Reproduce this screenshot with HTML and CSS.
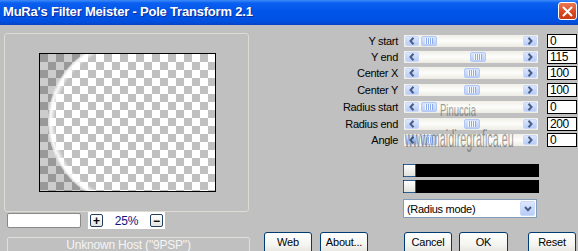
FILE: index.html
```html
<!DOCTYPE html>
<html>
<head>
  <title>MuRa's Filter Meister - Pole Transform 2.1</title>
  <link rel="stylesheet" href="styles.css">
</head>
<body>
  <div class="window">
    <div class="titlebar">
      <span class="title">MuRa's Filter Meister - Pole Transform 2.1</span>
      <span class="close">
        <svg width="11" height="11" viewBox="0 0 11 11"><path d="M1.5 1.5 L9.5 9.5 M9.5 1.5 L1.5 9.5" stroke="#fff" stroke-width="2" stroke-linecap="round"/></svg>
      </span>
    </div>

    <div class="client">
      <!-- preview side -->
      <div class="left">
        <div class="preview-frame">
          <div class="preview">
            <svg width="175" height="137" viewBox="0 0 175 137">
              <defs>
                <pattern id="chk" width="16" height="16" patternUnits="userSpaceOnUse">
                  <rect width="16" height="16" fill="#fff"/>
                  <rect width="8" height="8" fill="#c0c0c0"/>
                  <rect x="8" y="8" width="8" height="8" fill="#c0c0c0"/>
                </pattern>
                <radialGradient id="rim" cx="91" cy="68" r="83" gradientUnits="userSpaceOnUse">
                  <stop offset="0.91" stop-color="#fff" stop-opacity="0"/>
                  <stop offset="0.97" stop-color="#fff" stop-opacity="0.9"/>
                  <stop offset="1" stop-color="#d4d4d4" stop-opacity="0.85"/>
                </radialGradient>
                <clipPath id="lefthalf"><rect width="88" height="137"/></clipPath>
              </defs>
              <rect width="175" height="137" fill="url(#chk)"/>
              <path d="M0 0 H43.4 A83 83 0 0 0 44.9 137 H0 Z" fill="#000" fill-opacity="0.2"/>
              <circle cx="91" cy="68" r="83" fill="url(#rim)" clip-path="url(#lefthalf)"/>
            </svg>
          </div>
        </div>
        <div class="zoom-row">
          <div class="field"></div>
          <div class="zoom-ctl">
            <span class="zbtn">+</span>
            <span class="zval">25%</span>
            <span class="zbtn">&minus;</span>
          </div>
        </div>
        <div class="status">Unknown Host ("9PSP")</div>
      </div>

      <!-- controls side -->
      <div class="right">
        <div class="sliders">
          <span class="label">Y start</span>
          <div class="scroll">
            <span class="arrow"><svg width="6" height="8" viewBox="0 0 6 8"><path d="M4.5 0.8 L1.5 4 L4.5 7.2" fill="none" stroke="#4a5d86" stroke-width="2"/></svg></span>
            <div class="track"><span class="thumb" style="margin-left: 2px"><i></i></span></div>
            <span class="arrow"><svg width="6" height="8" viewBox="0 0 6 8"><path d="M1.5 0.8 L4.5 4 L1.5 7.2" fill="none" stroke="#4a5d86" stroke-width="2"/></svg></span>
          </div>
          <span class="value">0</span>

          <span class="label">Y end</span>
          <div class="scroll">
            <span class="arrow"><svg width="6" height="8" viewBox="0 0 6 8"><path d="M4.5 0.8 L1.5 4 L4.5 7.2" fill="none" stroke="#4a5d86" stroke-width="2"/></svg></span>
            <div class="track"><span class="thumb" style="margin-left: 51px"><i></i></span></div>
            <span class="arrow"><svg width="6" height="8" viewBox="0 0 6 8"><path d="M1.5 0.8 L4.5 4 L1.5 7.2" fill="none" stroke="#4a5d86" stroke-width="2"/></svg></span>
          </div>
          <span class="value">115</span>

          <span class="label">Center X</span>
          <div class="scroll">
            <span class="arrow"><svg width="6" height="8" viewBox="0 0 6 8"><path d="M4.5 0.8 L1.5 4 L4.5 7.2" fill="none" stroke="#4a5d86" stroke-width="2"/></svg></span>
            <div class="track"><span class="thumb" style="margin-left: 45px"><i></i></span></div>
            <span class="arrow"><svg width="6" height="8" viewBox="0 0 6 8"><path d="M1.5 0.8 L4.5 4 L1.5 7.2" fill="none" stroke="#4a5d86" stroke-width="2"/></svg></span>
          </div>
          <span class="value">100</span>

          <span class="label">Center Y</span>
          <div class="scroll">
            <span class="arrow"><svg width="6" height="8" viewBox="0 0 6 8"><path d="M4.5 0.8 L1.5 4 L4.5 7.2" fill="none" stroke="#4a5d86" stroke-width="2"/></svg></span>
            <div class="track"><span class="thumb" style="margin-left: 45px"><i></i></span></div>
            <span class="arrow"><svg width="6" height="8" viewBox="0 0 6 8"><path d="M1.5 0.8 L4.5 4 L1.5 7.2" fill="none" stroke="#4a5d86" stroke-width="2"/></svg></span>
          </div>
          <span class="value">100</span>

          <span class="label">Radius start</span>
          <div class="scroll">
            <span class="arrow"><svg width="6" height="8" viewBox="0 0 6 8"><path d="M4.5 0.8 L1.5 4 L4.5 7.2" fill="none" stroke="#4a5d86" stroke-width="2"/></svg></span>
            <div class="track"><span class="thumb" style="margin-left: 2px"><i></i></span></div>
            <span class="arrow"><svg width="6" height="8" viewBox="0 0 6 8"><path d="M1.5 0.8 L4.5 4 L1.5 7.2" fill="none" stroke="#4a5d86" stroke-width="2"/></svg></span>
          </div>
          <span class="value">0</span>

          <span class="label">Radius end</span>
          <div class="scroll">
            <span class="arrow"><svg width="6" height="8" viewBox="0 0 6 8"><path d="M4.5 0.8 L1.5 4 L4.5 7.2" fill="none" stroke="#4a5d86" stroke-width="2"/></svg></span>
            <div class="track"><span class="thumb" style="margin-left: 45px"><i></i></span></div>
            <span class="arrow"><svg width="6" height="8" viewBox="0 0 6 8"><path d="M1.5 0.8 L4.5 4 L1.5 7.2" fill="none" stroke="#4a5d86" stroke-width="2"/></svg></span>
          </div>
          <span class="value">200</span>

          <span class="label">Angle</span>
          <div class="scroll">
            <span class="arrow"><svg width="6" height="8" viewBox="0 0 6 8"><path d="M4.5 0.8 L1.5 4 L4.5 7.2" fill="none" stroke="#4a5d86" stroke-width="2"/></svg></span>
            <div class="track"><span class="thumb" style="margin-left: 2px"><i></i></span></div>
            <span class="arrow"><svg width="6" height="8" viewBox="0 0 6 8"><path d="M1.5 0.8 L4.5 4 L1.5 7.2" fill="none" stroke="#4a5d86" stroke-width="2"/></svg></span>
          </div>
          <span class="value">0</span>
        </div>

        <div class="bar first"><span class="swatch"></span></div>
        <div class="bar"><span class="swatch"></span></div>

        <div class="select">
          <span class="select-text">(Radius mode)</span>
          <span class="select-btn">
            <svg width="8" height="6" viewBox="0 0 8 6"><path d="M1 1 L4 4.2 L7 1" fill="none" stroke="#4a5d86" stroke-width="2"/></svg>
          </span>
        </div>

        <div class="buttons">
          <span class="btn btn-web">Web</span>
          <span class="btn btn-about">About...</span>
          <span class="btn btn-cancel">Cancel</span>
          <span class="btn btn-ok">OK</span>
          <span class="btn btn-reset">Reset</span>
        </div>
      </div>
    </div>

    <!-- watermark laid over the sliders -->
    <div class="watermark wm1">Pinuccia</div>
    <div class="watermark wm2">www.maidiregrafica.eu</div>
  </div>
</body>
</html>
```

FILE: styles.css
```css
* {
  box-sizing: border-box;
}
body {
  margin: 0;
  background-color: #c0c0c0;
  font-family: "Liberation Sans", Arial, sans-serif;
  font-size: 11px;
  letter-spacing: -0.2px;
  color: #000;
}
.window {
  position: relative;
  width: 578px;
  height: 251px;
  overflow: hidden;
  background-color: #c0c0c0;
}

/* title bar */
.titlebar {
  height: 25px;
  display: flex;
  justify-content: space-between;
  align-items: flex-start;
  padding: 0 1px 0 3px;
  background: linear-gradient(#3d8cf8 0, #0b5ff0 3px, #0055e8 45%, #0050e2 85%, #0a44c6 100%);
}
.title {
  margin-top: 4px;
  color: #fff;
  font-weight: bold;
  font-size: 13px;
  letter-spacing: -0.2px;
  text-shadow: 1px 1px 0 #0c2a98;
}
.close {
  margin-top: 2px;
  width: 19px;
  height: 18px;
  border: 1px solid #fff;
  border-radius: 3px;
  background: linear-gradient(#ea7a55, #d8461f 60%, #c93a14);
  display: flex;
  align-items: center;
  justify-content: center;
}
.close svg {
  display: block;
}

.client {
  display: flex;
}

/* left column */
.left {
  width: 255px;
  padding-top: 8px;
}
.preview-frame {
  margin-left: 4px;
  width: 245px;
  height: 179px;
  border: 1px solid #dcdcd2;
  border-radius: 3px;
  padding: 19px 0 0 34px;
}
.preview {
  width: 177px;
  height: 139px;
  border: 1px solid #000;
}
.preview svg {
  display: block;
}
.zoom-row {
  display: flex;
  align-items: center;
  height: 17px;
  padding-left: 7px;
}
.field {
  width: 74px;
  height: 15px;
  background: #fff;
  border: 1px solid #8a8a8a;
  border-radius: 2px;
}
.zoom-ctl {
  margin-left: 7px;
  width: 77px;
  height: 17px;
  background: #fff;
  display: flex;
  align-items: center;
  padding-left: 2px;
}
.zbtn {
  width: 13px;
  height: 13px;
  border: 1px solid #24405e;
  border-radius: 2px;
  background: linear-gradient(#fff, #e6e6e0);
  display: flex;
  align-items: center;
  justify-content: center;
  font-weight: bold;
  font-size: 12px;
  line-height: 1;
}
.zval {
  width: 47px;
  text-align: center;
  color: #12127c;
  font-size: 12px;
}
.status {
  margin: 8px 0 0 7px;
  width: 243px;
  height: 20px;
  border: 1px solid #e0e0da;
  border-radius: 2px;
  color: #f4f4f4;
  text-align: center;
  font-size: 12px;
  line-height: 15px;
}

/* right column */
.right {
  width: 323px;
  padding-top: 8px;
}
.sliders {
  display: grid;
  grid-template-columns: 149px 143px 30px;
  grid-template-rows: 16px 16px 16px 17px 17px 17px 16px;
  align-items: center;
}
.label {
  text-align: right;
  padding-right: 6px;
  font-size: 11px;
  letter-spacing: -0.3px;
}
.scroll {
  width: 134px;
  height: 12px;
  display: flex;
  align-items: center;
  padding: 0 1px;
  background: linear-gradient(#f0efe8, #fdfdfb 50%, #ecebe3);
}
.arrow {
  width: 14px;
  height: 10px;
  border: 1px solid #c9d8fb;
  border-radius: 2px;
  background: linear-gradient(#dce7fd, #b7ccf7);
  display: flex;
  align-items: center;
  justify-content: center;
}
.arrow svg {
  display: block;
}
.track {
  flex: 1;
  display: flex;
  align-items: center;
}
.thumb {
  width: 16px;
  height: 10px;
  border: 1px solid #b3c8f5;
  border-radius: 2px;
  background: linear-gradient(#d9e5fd, #bccff8);
  display: flex;
  align-items: center;
  justify-content: center;
}
.thumb i {
  width: 8px;
  height: 6px;
  background: repeating-linear-gradient(90deg, #f4f8ff 0 1px, #8eaaea 1px 2px);
}
.value {
  height: 14px;
  background: #fff;
  border: 1px solid #000;
  padding-left: 2px;
  font-size: 12px;
  letter-spacing: -0.4px;
  line-height: 12px;
}

.bar {
  margin: 3px 0 0 148px;
  width: 136px;
  height: 13px;
  background: #000;
  display: flex;
}
.bar.first {
  margin-top: 16px;
}
.swatch {
  width: 13px;
  height: 13px;
  border: 1px solid #2f5f8e;
  border-radius: 1px;
  background: linear-gradient(#fff, #e2e2dc);
}

.select {
  margin: 6px 0 0 148px;
  width: 134px;
  height: 19px;
  background: #fff;
  border: 1px solid #7f9db9;
  display: flex;
  align-items: center;
  padding-right: 1px;
}
.select-text {
  flex: 1;
  padding-left: 3px;
  font-size: 11px;
  letter-spacing: -0.3px;
}
.select-btn {
  width: 15px;
  height: 15px;
  border: 1px solid #c9d8fb;
  border-radius: 2px;
  background: linear-gradient(#dce7fd, #b7ccf7);
  display: flex;
  align-items: center;
  justify-content: center;
}

.buttons {
  margin-top: 14px;
  padding-left: 9px;
  display: flex;
}
.btn {
  width: 48px;
  height: 22px;
  border: 1px solid #003c74;
  border-radius: 3px;
  background: linear-gradient(#ffffff, #f4f4f0 60%, #e4e3dc);
  text-align: center;
  font-size: 11px;
  line-height: 19px;
}
.btn-about {
  margin-left: 8px;
}
.btn-cancel {
  margin-left: 36px;
}
.btn-ok {
  margin-left: 7px;
  width: 49px;
}
.btn-reset {
  margin-left: 20px;
}

/* watermark */
.watermark {
  position: absolute;
  color: rgba(60, 60, 60, 0.5);
  white-space: nowrap;
  transform-origin: 0 0;
  letter-spacing: 0;
}
.wm1 {
  left: 440px;
  top: 101px;
  font-size: 17px;
  transform: scaleX(0.56);
}
.wm2 {
  left: 405px;
  top: 126px;
  font-size: 23px;
  transform: scaleX(0.47);
}
```
